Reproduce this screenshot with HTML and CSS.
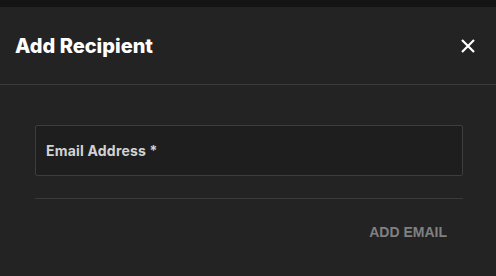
FILE: index.html
```html
<!DOCTYPE html>
<html lang="en">

<head>
    <meta charset="UTF-8">
    <meta name="viewport" content="width=device-width, initial-scale=1.0">
    <title>Add Recipient</title>
    <link rel="stylesheet" href="styles.css">
</head>

<body>
    <div class="top-strip"></div>
    <div class="dialog">
        <div class="dialog-header">
            <h2 class="dialog-title">Add Recipient</h2>
            <button class="close-button" aria-label="Close">
                <svg width="14" height="14" viewBox="0 0 14 14">
                    <path d="M1 1 L13 13 M13 1 L1 13" stroke="#ffffff" stroke-width="2.2" fill="none" />
                </svg>
            </button>
        </div>

        <div class="dialog-body">
            <div class="field">
                <span class="field-label">Email Address *</span>
            </div>
            <div class="divider"></div>
            <div class="actions">
                <button class="text-button">ADD EMAIL</button>
            </div>
        </div>
    </div>
</body>

</html>
```

FILE: styles.css
```css
body {
    margin: 0;
    background-color: #232323;
    font-family: Inter, "Liberation Sans", sans-serif;
    color: #ffffff;
    height: 276px;
    overflow: hidden;
}

.top-strip {
    height: 7px;
    background-color: #141414;
}

.dialog {
    background-color: #232323;
}

.dialog-header {
    display: flex;
    justify-content: space-between;
    align-items: center;
    height: 78px;
    padding: 0 21px 0 15px;
    border-bottom: 1px solid #3b3b3b;
    box-sizing: border-box;
}

.dialog-title {
    margin: 0;
    font-size: 20px;
    font-weight: 800;
}

.close-button {
    display: flex;
    padding: 0;
    border: none;
    background: none;
    cursor: pointer;
}

.dialog-body {
    padding: 40px 33px 0 35px;
}

.field {
    display: flex;
    align-items: center;
    height: 51px;
    padding: 0 10px;
    background-color: #1e1e1e;
    border: 1px solid #3d3d3d;
    border-radius: 2px;
    box-sizing: border-box;
}

.field-label {
    font-size: 14px;
    font-weight: 700;
    letter-spacing: 0.2px;
    color: #d2d2d2;
}

.divider {
    height: 1px;
    margin-top: 22px;
    background-color: #3a3a3a;
}

.actions {
    display: flex;
    justify-content: flex-end;
    padding: 19px 16px 0 0;
}

.text-button {
    padding: 6px 0;
    border: none;
    background: none;
    font-family: "Liberation Sans", Arial, sans-serif;
    font-size: 14px;
    font-weight: 700;
    color: #808080;
    cursor: pointer;
}
```
